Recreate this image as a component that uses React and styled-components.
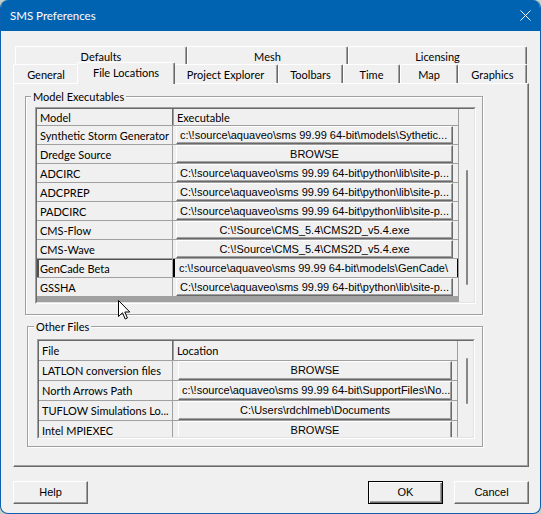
import React from "react";
import styled, { createGlobalStyle, css } from "styled-components";

const UI = `Lato, "Noto Sans", "DejaVu Sans", sans-serif`;
const CLASSIC = `"Liberation Sans", Arial, sans-serif`;

const GlobalStyle = createGlobalStyle`
  html, body { margin: 0; padding: 0; }
  body { background: #c9d0c8; width: 541px; height: 514px; overflow: hidden; }
  *, *::before, *::after { box-sizing: border-box; }
`;

const Window = styled.div`
  position: relative;
  width: 541px;
  height: 514px;
  background: #f0f0f0;
  border: 1px solid #0e5fae;
  border-top: none;
  border-radius: 8px;
  overflow: hidden;
  display: flex;
  flex-direction: column;
  font-family: ${UI};
  color: #000;
`;

const TitleBar = styled.div`
  flex: none;
  height: 31px;
  background: #0063b1;
  display: flex;
  align-items: center;
  padding-left: 9px;
  color: #fff;
  font-size: 11.5px;
`;

const TitleText = styled.span`
  padding-bottom: 1px;
`;

const CloseBox = styled.div`
  margin-left: auto;
  width: 30px;
  height: 31px;
  display: flex;
  align-items: center;
  justify-content: center;
`;

const Body = styled.div`
  flex: 1;
  display: flex;
  flex-direction: column;
  padding: 15px 0 0 12px;
`;

const TabRow = styled.div`
  flex: none;
  display: flex;
  height: ${(p) => p.$h}px;
  padding-left: ${(p) => p.$indent}px;
`;

const Tab = styled.div`
  flex: none;
  width: ${(p) => p.$w}px;
  height: 100%;
  display: flex;
  align-items: center;
  justify-content: center;
  font-family: ${UI};
  font-size: 11px;
  white-space: nowrap;
  background: #f0f0f0;
  border-top: 1px solid #fff;
  border-left: 1px solid #fff;
  border-right: 1px solid #696969;
  box-shadow: inset -1px 0 0 #a0a0a0;
  border-radius: 2px 2px 0 0;
  padding-top: 1px;
  ${(p) =>
    p.$selected &&
    css`
      position: relative;
      z-index: 2;
      width: ${p.$w + 4}px;
      height: 22px;
      margin: -2px -2px 0 -2px;
      align-self: flex-start;
      padding-top: 0;
      padding-bottom: 2px;
    `}
`;

const Panel = styled.div`
  flex: none;
  width: 516px;
  height: 384px;
  border-top: 1px solid #fff;
  border-left: 1px solid #fff;
  border-right: 1px solid #696969;
  border-bottom: 1px solid #696969;
  box-shadow: inset -1px -1px 0 #a0a0a0;
  padding: 12px 0 0 11px;
  display: flex;
  flex-direction: column;
`;

const GroupBox = styled.div`
  position: relative;
  flex: none;
  width: ${(p) => p.$w}px;
  height: ${(p) => p.$h}px;
  margin-left: ${(p) => p.$ml || 0}px;
  margin-top: ${(p) => p.$mt || 0}px;
  border: 1px solid #a0a0a0;
  box-shadow: inset 1px 1px 0 #fff, 1px 1px 0 #fff;
  padding: ${(p) => p.$pt}px 0 0 9px;
`;

const Caption = styled.span`
  position: absolute;
  top: -8px;
  left: ${(p) => p.$left}px;
  padding: 0 2px;
  background: #f0f0f0;
  font-size: 11px;
  line-height: 15px;
  white-space: nowrap;
`;

const GridFrame = styled.div`
  width: ${(p) => p.$w}px;
  height: ${(p) => p.$h}px;
  display: flex;
  border-top: 1px solid #a0a0a0;
  border-left: 1px solid #a0a0a0;
  border-right: 1px solid #fff;
  border-bottom: 1px solid #fff;
`;

const GridInner = styled.div`
  flex: 1;
  min-height: 0;
  display: flex;
  overflow: hidden;
  background: #f0f0f0;
  border-top: 1px solid #696969;
  border-left: 1px solid #696969;
  border-right: 1px solid #e3e3e3;
  border-bottom: 1px solid #e3e3e3;
`;

const Table = styled.div`
  flex: none;
  width: ${(p) => p.$w}px;
  display: flex;
  flex-direction: column;
  border-right: 1px solid #a0a0a0;
`;

const HeaderRow = styled.div`
  flex: none;
  display: grid;
  grid-template-columns: ${(p) => p.$col}px 1fr;
  height: ${(p) => p.$h}px;
  border-bottom: 1px solid #a0a0a0;
`;

const HeaderCell = styled.div`
  display: flex;
  align-items: center;
  padding-left: ${(p) => p.$pad}px;
  font-size: 11px;
  white-space: nowrap;
  ${(p) =>
    p.$first &&
    css`
      border-right: 1px solid #696969;
      box-shadow: 1px 0 0 #a0a0a0;
    `}
`;

const Row = styled.div`
  flex: none;
  display: grid;
  grid-template-columns: ${(p) => p.$col}px 1fr;
  height: ${(p) => p.$h}px;
`;

const NameCell = styled.div`
  display: flex;
  align-items: center;
  padding-left: 3px;
  font-size: 11px;
  white-space: nowrap;
  overflow: hidden;
  border-right: 1px solid #a0a0a0;
  border-bottom: 1px solid #a0a0a0;
  ${(p) =>
    p.$current &&
    css`
      box-shadow: inset 2px 1px 0 #505050;
    `}
`;

const ValueCell = styled.div`
  display: flex;
  min-width: 0;
  padding: 0 ${(p) => p.$pr}px 0 ${(p) => p.$pl}px;
  border-bottom: 1px solid #a0a0a0;
`;

const CellButton = styled.div`
  flex: 1;
  min-width: 0;
  display: flex;
  align-items: center;
  justify-content: ${(p) => (p.$center ? "center" : "flex-start")};
  padding: 0 3px 1px;
  font-family: ${CLASSIC};
  font-size: 11px;
  white-space: nowrap;
  overflow: hidden;
  background: #f0f0f0;
  border-top: 1px solid #fff;
  border-left: 1px solid #fff;
  border-right: 1px solid #696969;
  border-bottom: 1px solid #696969;
  box-shadow: inset -1px -1px 0 #a0a0a0;
`;

const EditBox = styled.div`
  flex: 1;
  min-width: 0;
  display: flex;
  align-items: center;
  padding: 0 0 1px 4px;
  margin-right: -2px;
  font-family: ${CLASSIC};
  font-size: 11px;
  white-space: nowrap;
  overflow: hidden;
  border-left: 2px solid #000;
  border-right: 1px solid #000;
`;

const Band = styled.div`
  flex: none;
  height: 5px;
  background: #a0a0a0;
`;

const ScrollTrack = styled.div`
  flex: 1;
  display: flex;
  padding-left: ${(p) => p.$pl}px;
`;

const Thumb = styled.div`
  width: 2px;
  height: ${(p) => p.$h}px;
  margin-top: ${(p) => p.$top}px;
  background: #868686;
  border-radius: 1px;
`;

const ButtonRow = styled.div`
  flex: none;
  width: 516px;
  margin-top: 14px;
  display: flex;
  gap: 11px;
`;

const Spacer = styled.div`
  flex: 1;
`;

const DialogButton = styled.div`
  flex: none;
  width: 75px;
  height: 23px;
  display: flex;
  align-items: center;
  justify-content: center;
  font-family: ${CLASSIC};
  font-size: 11px;
  padding-bottom: 1px;
  background: #f0f0f0;
  ${(p) =>
    p.$default
      ? css`
          border: 1px solid #000;
          box-shadow: inset 1px 1px 0 #fff, inset -1px -1px 0 #696969,
            inset -2px -2px 0 #a0a0a0;
        `
      : css`
          border-top: 1px solid #fff;
          border-left: 1px solid #fff;
          border-right: 1px solid #696969;
          border-bottom: 1px solid #696969;
          box-shadow: inset -1px -1px 0 #a0a0a0;
        `}
`;

const Cursor = styled.svg`
  position: absolute;
  left: 117px;
  top: 300px;
  width: 13px;
  height: 20px;
  pointer-events: none;
`;

const backTabs = [
  { label: "Defaults", w: 172 },
  { label: "Mesh", w: 161 },
  { label: "Licensing", w: 179 },
];

const frontTabs = [
  { label: "General", w: 66 },
  { label: "File Locations", w: 94, selected: true },
  { label: "Project Explorer", w: 105 },
  { label: "Toolbars", w: 65 },
  { label: "Time", w: 57 },
  { label: "Map", w: 58 },
  { label: "Graphics", w: 69 },
];

const BS = "\\";
const p = (...parts) => parts.join(BS);

const pyPath = p("C:", "!source", "aquaveo", "sms 99.99 64-bit", "python", "lib", "site-p...");
const cmsPath = p("C:", "!Source", "CMS_5.4", "CMS2D_v5.4.exe");

const modelRows = [
  { name: "Synthetic Storm Generator", value: p("c:", "!source", "aquaveo", "sms 99.99 64-bit", "models", "Sythetic...") },
  { name: "Dredge Source", value: "BROWSE", center: true },
  { name: "ADCIRC", value: pyPath },
  { name: "ADCPREP", value: pyPath },
  { name: "PADCIRC", value: pyPath },
  { name: "CMS-Flow", value: cmsPath, center: true },
  { name: "CMS-Wave", value: cmsPath, center: true },
  { name: "GenCade Beta", value: p("c:", "!source", "aquaveo", "sms 99.99 64-bit", "models", "GenCade", ""), edit: true },
  { name: "GSSHA", value: pyPath },
];

const otherRows = [
  { name: "LATLON conversion files", value: "BROWSE", center: true },
  { name: "North Arrows Path", value: p("c:", "!source", "aquaveo", "sms 99.99 64-bit", "SupportFiles", "No...") },
  { name: "TUFLOW Simulations Lo...", value: p("C:", "Users", "rdchlmeb", "Documents"), center: true },
  { name: "Intel MPIEXEC", value: "BROWSE", center: true },
];

function DataGrid({ frame, table, col, headH, rowH, headers, rows, pl, pr, valuePad, band, thumb, trackPad }) {
  return (
    <GridFrame $w={frame.w} $h={frame.h}>
      <GridInner>
        <Table $w={table}>
          <HeaderRow $col={col} $h={headH}>
            <HeaderCell $first $pad={3}>{headers[0]}</HeaderCell>
            <HeaderCell $pad={valuePad}>{headers[1]}</HeaderCell>
          </HeaderRow>
          {rows.map((r) => (
            <Row key={r.name} $col={col} $h={rowH}>
              <NameCell $current={r.edit}>{r.name}</NameCell>
              {r.edit ? (
                <ValueCell $pl={0} $pr={2}>
                  <EditBox>{r.value}</EditBox>
                </ValueCell>
              ) : (
                <ValueCell $pl={pl} $pr={pr}>
                  <CellButton $center={r.center}>{r.value}</CellButton>
                </ValueCell>
              )}
            </Row>
          ))}
          {band && <Band />}
        </Table>
        <ScrollTrack $pl={trackPad}>
          <Thumb $top={thumb.top} $h={thumb.h} />
        </ScrollTrack>
      </GridInner>
    </GridFrame>
  );
}

export default function App() {
  return (
    <>
      <GlobalStyle />
      <Window>
        <TitleBar>
          <TitleText>SMS Preferences</TitleText>
          <CloseBox>
            <svg width="11" height="11" viewBox="0 0 11 11">
              <path d="M0.5 0.5 L10.5 10.5 M10.5 0.5 L0.5 10.5" stroke="#fff" strokeWidth="1" fill="none" />
            </svg>
          </CloseBox>
        </TitleBar>
        <Body>
          <TabRow $h={18} $indent={2}>
            {backTabs.map((t) => (
              <Tab key={t.label} $w={t.w}>{t.label}</Tab>
            ))}
          </TabRow>
          <TabRow $h={19} $indent={0}>
            {frontTabs.map((t) => (
              <Tab key={t.label} $w={t.w} $selected={t.selected}>{t.label}</Tab>
            ))}
          </TabRow>
          <Panel>
            <GroupBox $w={458} $h={219} $pt={10}>
              <Caption $left={5}>Model Executables</Caption>
              <DataGrid
                frame={{ w: 441, h: 197 }}
                table={422}
                col={136}
                headH={17}
                rowH={19}
                headers={["Model", "Executable"]}
                rows={modelRows}
                pl={3}
                pr={5}
                valuePad={4}
                band
                thumb={{ top: 61, h: 115 }}
                trackPad={7}
              />
            </GroupBox>
            <GroupBox $w={456} $h={121} $ml={2} $mt={11} $pt={12}>
              <Caption $left={6}>Other Files</Caption>
              <DataGrid
                frame={{ w: 438, h: 100 }}
                table={419}
                col={134}
                headH={20}
                rowH={20}
                headers={["File", "Location"]}
                rows={otherRows}
                pl={5}
                pr={5}
                valuePad={4}
                band={false}
                thumb={{ top: 17, h: 46 }}
                trackPad={8}
              />
            </GroupBox>
          </Panel>
          <ButtonRow>
            <DialogButton>Help</DialogButton>
            <Spacer />
            <DialogButton $default>OK</DialogButton>
            <DialogButton>Cancel</DialogButton>
          </ButtonRow>
        </Body>
        <Cursor viewBox="0 0 13 20">
          <path
            d="M0.5 0.5 L0.5 16.5 L4.5 12.8 L7.2 19 L9.4 18 L6.8 12 L11.8 12 Z"
            fill="#fff"
            stroke="#000"
            strokeWidth="1"
            strokeLinejoin="miter"
          />
        </Cursor>
      </Window>
    </>
  );
}
